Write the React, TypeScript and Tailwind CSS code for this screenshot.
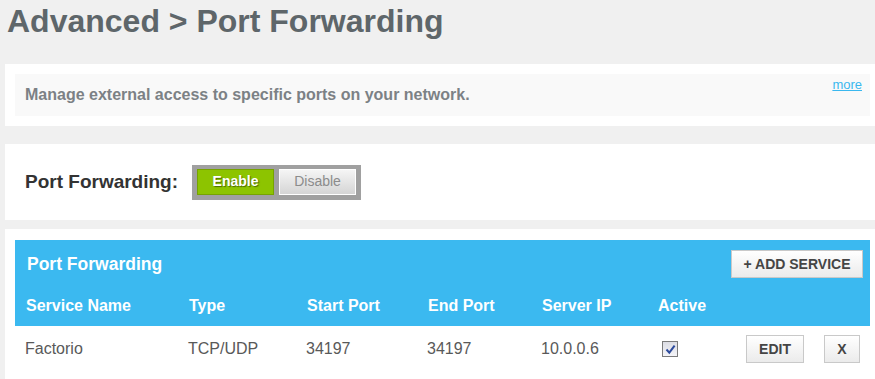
import React from "react";

const columns = ["Service Name", "Type", "Start Port", "End Port", "Server IP", "Active"];

const services = [
  { name: "Factorio", type: "TCP/UDP", start: "34197", end: "34197", ip: "10.0.0.6", active: true },
];

function Checkbox({ checked }: { checked: boolean }) {
  return (
    <span className="flex h-[16px] w-[16px] items-center justify-center border border-[#7b7b7b] bg-linear-to-b from-[#dcdde4] to-[#f4f4f8]">
      {checked && (
        <svg width="11" height="11" viewBox="0 0 11 11">
          <path d="M1.5 5.5 L4.3 8.6 L9.6 1.6" fill="none" stroke="#2d4b9c" strokeWidth="2" />
        </svg>
      )}
    </span>
  );
}

function GrayButton({ children, className }: { children: React.ReactNode; className?: string }) {
  return (
    <button
      className={
        "flex h-[28px] items-center justify-center border border-[#c9c9c9] bg-linear-to-b from-white to-[#ebebeb] text-[14px] font-bold text-[#454545] " +
        (className ?? "")
      }
    >
      {children}
    </button>
  );
}

export default function App() {
  return (
    <div className="min-h-[379px] w-[875px] overflow-hidden bg-[#f0f0f0] font-['Liberation_Sans',Arial,sans-serif]">
      <div className="h-[64px] pl-[7px] pt-[5px]">
        <h1 className="text-[32px] font-bold leading-[32px] text-[#5e666a]">Advanced &gt; Port Forwarding</h1>
      </div>

      <div className="ml-[5px] bg-white pb-[10px] pl-[10px] pr-[5px] pt-[10px]">
        <div className="flex h-[42px] items-start justify-between bg-[#f9f9f9] pl-[10px] pr-[8px]">
          <p className="self-center text-[16px] font-bold text-[#7c8185]">
            Manage external access to specific ports on your network.
          </p>
          <a href="#" className="mt-[3px] text-[13px] leading-[15px] text-[#3ab8ef] underline">
            more
          </a>
        </div>
      </div>

      <div className="ml-[5px] mt-[18px] flex h-[76px] items-center gap-[14px] bg-white pl-[20px]">
        <span className="text-[19px] font-bold text-[#333]">Port Forwarding:</span>
        <div className="flex gap-[5px] bg-[#a0a0a0] px-[5px] pb-[5px] pt-[4px]">
          <button className="h-[26px] w-[77px] border border-[#76a300] bg-[#8dc400] text-[14px] font-bold text-white [text-shadow:1px_1px_1px_#4a6a00]">
            Enable
          </button>
          <button className="h-[26px] w-[77px] border border-white bg-linear-to-b from-[#f5f5f5] to-[#d5d5d5] text-[14px] text-[#8c8c8c]">
            Disable
          </button>
        </div>
      </div>

      <div className="ml-[5px] mt-[9px] bg-white pb-[10px] pl-[10px] pr-[5px] pt-[11px]">
        <div className="bg-[#3bb9f0] text-white">
          <div className="flex items-center justify-between pl-[12px] pr-[7px] pt-[10px]">
            <span className="text-[17.5px] font-bold">Port Forwarding</span>
            <GrayButton className="w-[132px]">+ ADD SERVICE</GrayButton>
          </div>
          <div className="grid h-[48px] grid-cols-[163px_118px_121px_114px_116px_89px_1fr] pt-[19px] text-[16px] font-bold leading-[18px]">
            {columns.map((c) => (
              <span key={c} className="pl-[11px]">
                {c}
              </span>
            ))}
          </div>
        </div>
        {services.map((s) => (
          <div
            key={s.name}
            className="grid grid-cols-[163px_118px_121px_114px_116px_89px_1fr] items-center py-[9px] text-[16px] leading-[18px] text-[#595959]"
          >
            <span className="pl-[10px]">{s.name}</span>
            <span className="pl-[10px]">{s.type}</span>
            <span className="pl-[10px]">{s.start}</span>
            <span className="pl-[10px]">{s.end}</span>
            <span className="pl-[10px]">{s.ip}</span>
            <span className="pl-[15px]">
              <Checkbox checked={s.active} />
            </span>
            <div className="flex gap-[20px] pl-[10px]">
              <GrayButton className="w-[58px]">EDIT</GrayButton>
              <GrayButton className="w-[36px]">X</GrayButton>
            </div>
          </div>
        ))}
      </div>
    </div>
  );
}
